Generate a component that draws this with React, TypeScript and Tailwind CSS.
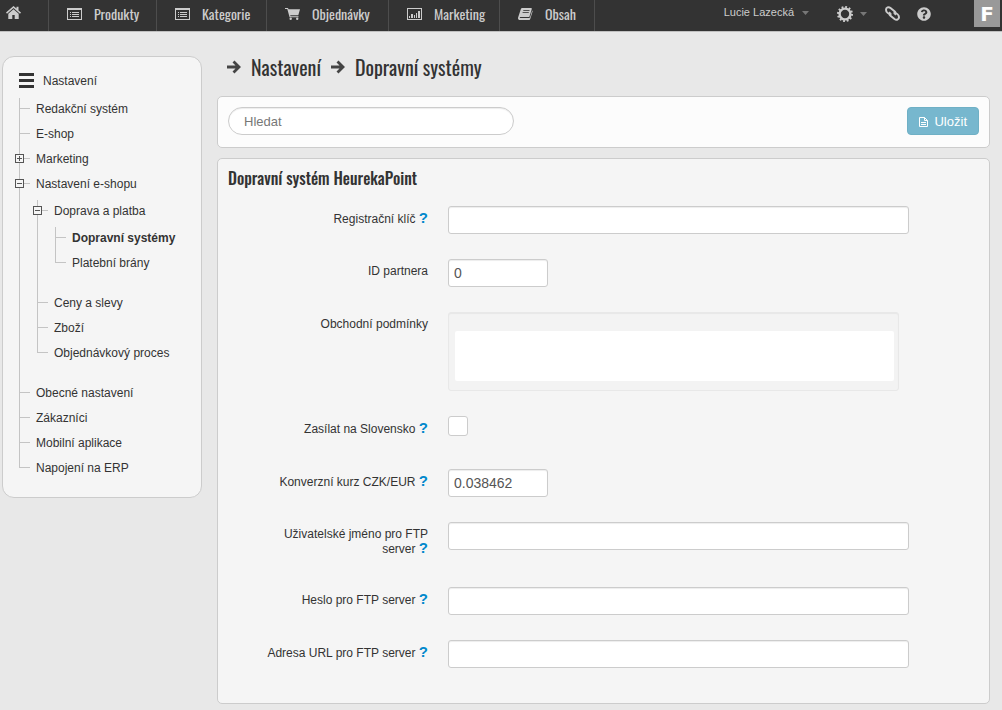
import type { ReactNode } from 'react';
import clsx from 'clsx';
import { FaQuestionCircle } from 'react-icons/fa';

type TreeNode = {
  label: string;
  active?: boolean;
  expandable?: boolean;
  children?: TreeNode[];
};

const TREE: TreeNode[] = [
  { label: 'Redakční systém' },
  { label: 'E-shop' },
  { label: 'Marketing', expandable: true },
  {
    label: 'Nastavení e-shopu',
    expandable: true,
    children: [
      {
        label: 'Doprava a platba',
        expandable: true,
        children: [
          { label: 'Dopravní systémy', active: true },
          { label: 'Platební brány' },
        ],
      },
      { label: 'Ceny a slevy' },
      { label: 'Zboží' },
      { label: 'Objednávkový proces' },
    ],
  },
  { label: 'Obecné nastavení' },
  { label: 'Zákazníci' },
  { label: 'Mobilní aplikace' },
  { label: 'Napojení na ERP' },
];

function HomeIcon() {
  return (
    <svg width="15" height="13" viewBox="0 0 15 13" fill="currentColor" aria-hidden="true">
      <path d="M7.5 0 0 6.6l1 1.1 6.5-5.6L14 7.7l1-1.1-2.5-2.2V.8h-2v1.8z" />
      <path d="M7.5 3.2 2.3 7.7V13h4V9h2.4v4h4V7.7z" />
    </svg>
  );
}

function ListIcon() {
  return (
    <svg width="15" height="12" viewBox="0 0 15 12" fill="currentColor" shapeRendering="crispEdges" aria-hidden="true">
      <path d="M0 0h15v12H0zM1 2v9h13V2z" fillRule="evenodd" />
      <path d="M3 4h1v1H3zM5 4h7v1H5zM3 6h1v1H3zM5 6h7v1H5zM3 8h1v1H3zM5 8h7v1H5z" />
    </svg>
  );
}

function CartIcon() {
  return (
    <svg width="15" height="12" viewBox="0 0 15 12" fill="currentColor" className="shrink-0" aria-hidden="true">
      <path d="M0 0h3l.5 1.3H15L13.3 7.3H5.2l.3 1h8v1H4.6L2.3 1H0z" />
      <circle cx="5.7" cy="10.8" r="1.2" />
      <circle cx="12.2" cy="10.8" r="1.2" />
    </svg>
  );
}

function ChartIcon() {
  return (
    <svg width="15" height="12" viewBox="0 0 15 12" fill="currentColor" shapeRendering="crispEdges" aria-hidden="true">
      <path d="M0 0h15v12H0zM1 1v10h13V1z" fillRule="evenodd" />
      <path d="M2 8h1v2H2zM4 6h2v4H4zM7 7h1v3H7zM9 5h1v5H9zM11 3h2v7h-2z" />
    </svg>
  );
}

function BookIcon() {
  return (
    <svg width="15" height="12" viewBox="0 0 15 12" aria-hidden="true">
      <path d="M4.5 0H13c.7 0 1 .4.8 1l-2.3 7.4c-.2.5-.5.7-1.1.7H2.2c-.7 0-.7.9.1.9h8.6c.7 0 1-.2 1.2-.8l2.1-6.7c.4.3.4.7.3 1.2l-2.2 7c-.2.8-.7 1.3-1.5 1.3H1.8C.5 12-.3 10.7.1 9.4l2.7-8.200C3.1.4 3.6 0 4.500 0z" fill="currentColor" />
      <path d="M5.3 2.500h6.200M4.600 4.500h6.200" stroke="#333" strokeWidth=".8" />
    </svg>
  );
}

function GearIcon() {
  return (
    <svg width="16" height="16" viewBox="0 0 16 16" fill="none" stroke="currentColor" aria-hidden="true">
      <circle cx="8" cy="8" r="5.4" strokeWidth="2.4" />
      <circle cx="8" cy="8" r="7" strokeWidth="2" strokeDasharray="1.83 1.835" />
    </svg>
  );
}

function LinkIcon() {
  return (
    <svg width="15" height="15" viewBox="0 0 15 15" fill="none" stroke="currentColor" strokeWidth="2" aria-hidden="true">
      <path d="M6.5 8.200C3.500 8 1 6 1 3.700 1 1.400 3.500.500 5.500 2l4 3.200c1.200 1 1.400 2.300.3 3.600" />
      <path d="M8.500 6.800C11.500 7 14 9 14 11.300c0 2.300-2.500 3.200-4.500 1.700l-4-3.200c-1.200-1-1.400-2.300-.3-3.600" />
    </svg>
  );
}

function Caret() {
  return (
    <svg width="7" height="4" viewBox="0 0 7 4" fill="#777" aria-hidden="true">
      <path d="M0 0h7L3.5 4z" />
    </svg>
  );
}

function ArrowIcon() {
  return (
    <svg width="14" height="14" viewBox="0 0 14 14" fill="none" stroke="#444" strokeWidth="2.8" aria-hidden="true">
      <path d="M0 7h12M6.500 1.500 12 7l-5.500 5.500" />
    </svg>
  );
}

function FileIcon() {
  return (
    <svg width="9" height="10" viewBox="0 0 9 10" fill="none" stroke="currentColor" aria-hidden="true">
      <path d="M.5.5h5l3 3v6h-8zM5.5.5v3h3M2 5.5h5M2 7.5h5" />
    </svg>
  );
}

const NAV = [
  { label: 'Produkty', icon: <ListIcon />, width: 'w-[108px]' },
  { label: 'Kategorie', icon: <ListIcon />, width: 'w-[110px]' },
  { label: 'Objednávky', icon: <CartIcon />, width: 'w-[122px]' },
  { label: 'Marketing', icon: <ChartIcon />, width: 'w-[111px]' },
  { label: 'Obsah', icon: <BookIcon />, width: 'w-[95px]' },
];

function Header() {
  return (
    <header className="flex h-8 items-stretch justify-between border-b border-[#c0c0c0] bg-[#333] text-[#ccc]">
      <nav className="flex">
        <a href="#" aria-label="Domů" className="flex w-[49px] items-center border-r border-[#4d4d4d] pb-1.5 pl-1.5">
          <HomeIcon />
        </a>
        {NAV.map(item => (
          <a
            key={item.label}
            href="#"
            className={clsx(
              "flex items-center gap-3 border-r border-[#4d4d4d] pb-1 pl-[18px] font-['Oswald',sans-serif] text-sm",
              item.width,
            )}
          >
            {item.icon}
            {item.label}
          </a>
        ))}
      </nav>
      <div className="flex items-center pr-0.5">
        <button type="button" className="mr-7 flex items-center gap-2 pb-1.5 text-[11px]">
          Lucie Lazecká
          <Caret />
        </button>
        <button type="button" aria-label="Nastavení účtu" className="mr-[18px] flex items-center gap-[7px] pb-1">
          <GearIcon />
          <Caret />
        </button>
        <a href="#" aria-label="Odkazy" className="mr-[17px] pb-1">
          <LinkIcon />
        </a>
        <a href="#" aria-label="Nápověda" className="mr-[43px] pb-1">
          <FaQuestionCircle size={14} />
        </a>
        <a
          href="#"
          className="mb-1 flex h-[27px] w-[26px] items-center justify-center bg-[#999] font-['DejaVu_Sans',sans-serif] text-xl font-bold text-white"
        >
          F
        </a>
      </div>
    </header>
  );
}

function Tree({ nodes, nested }: { nodes: TreeNode[]; nested?: boolean }) {
  return (
    <ul className={clsx(nested && 'mt-0.5 mb-[15px] ml-[7px]')}>
      {nodes.map((node, i) => (
        <li key={node.label} className="relative flex">
          <div className="flex w-[11px] flex-col">
            <div className="h-[11px] border-b border-l border-[#c4c4c4]" />
            {i < nodes.length - 1 && <div className="flex-1 border-l border-[#c4c4c4]" />}
          </div>
          {node.expandable && (
            <button
              type="button"
              aria-label={node.children ? 'Sbalit' : 'Rozbalit'}
              className="absolute top-1.5 -left-1 bg-[#f5f5f5] text-[#555]"
            >
              <svg width="9" height="9" viewBox="0 0 9 9" fill="none" stroke="currentColor" shapeRendering="crispEdges">
                <path d="M.5.5h8v8h-8zM2 4.5h5" />
                {!node.children && <path d="M4.5 2v5" />}
              </svg>
            </button>
          )}
          <div className="flex-1">
            <div className="h-[25px] pl-1.5 leading-[22px]">
              <a href="#" className={clsx(node.active && 'font-bold')}>
                {node.label}
              </a>
            </div>
            {node.children && <Tree nodes={node.children} nested />}
          </div>
        </li>
      ))}
    </ul>
  );
}

function Sidebar() {
  return (
    <aside className="w-[200px] shrink-0 rounded-xl border border-[#ccc] bg-[#f5f5f5] px-4 pt-3.5 pb-[15px]">
      <a href="#" className="flex h-[27px] gap-2 leading-5">
        <svg width="16" height="15" viewBox="0 0 16 15" fill="#333" className="mt-0.5" aria-hidden="true">
          <path d="M0 0h15v3H0zM0 6h15v3H0zM0 12h15v3H0z" />
        </svg>
        Nastavení
      </a>
      <Tree nodes={TREE} />
    </aside>
  );
}

const INPUT =
  'h-7 rounded-[3px] border border-[#ccc] bg-white px-[5px] text-sm text-[#555] shadow-[inset_0_1px_1px_rgba(0,0,0,0.075)] outline-none';

function Row({ id, label, help, children }: { id: string; label: string; help?: boolean; children: ReactNode }) {
  return (
    <div className="flex min-h-7 gap-5">
      <div className="w-[200px] shrink-0 pt-[5px] pb-1.5 pl-5 text-right leading-[14px]">
        <label htmlFor={id}>{label}</label>
        {help && (
          <>
            {' '}
            <a href="#" className="text-[15px] leading-[14px] font-bold text-[#08c]">?</a>
          </>
        )}
      </div>
      <div className="min-w-0 flex-1">{children}</div>
    </div>
  );
}

function SettingsForm() {
  return (
    <form className="rounded-[5px] border border-[#ccc] bg-[#f5f5f5] px-2.5 pt-1.5 pb-[35px]">
      <h2 className="mb-[15px] font-['Oswald',sans-serif] text-base leading-[26px] font-medium">
        Dopravní systém HeurekaPoint
      </h2>
      <div className="flex flex-col gap-[25px]">
        <Row id="key" label="Registrační klíč" help>
          <input id="key" type="text" className={clsx(INPUT, 'block w-full max-w-[461px]')} />
        </Row>
        <Row id="partner" label="ID partnera">
          <input id="partner" type="text" defaultValue="0" className={clsx(INPUT, 'block w-[100px]')} />
        </Row>
        <Row id="terms" label="Obchodní podmínky">
          <div className="max-w-[451px] rounded-[3px] border border-[#e8e8e8] bg-[#f3f3f3] pt-[18px] pr-1 pb-[9px] pl-1.5 shadow-[inset_0_1px_1px_rgba(0,0,0,0.05)]">
            <textarea id="terms" className="block h-[50px] w-full resize-none rounded-[2px] bg-white px-1.5 outline-none" />
          </div>
        </Row>
        <Row id="slovakia" label="Zasílat na Slovensko" help>
          <input
            id="slovakia"
            type="checkbox"
            className="block size-5 appearance-none rounded-[3px] border border-[#ccc] bg-white checked:bg-[#08c]"
          />
        </Row>
        <Row id="rate" label="Konverzní kurz CZK/EUR" help>
          <input id="rate" type="text" defaultValue="0.038462" className={clsx(INPUT, 'block w-[100px]')} />
        </Row>
        <Row id="ftp-user" label="Uživatelské jméno pro FTP server" help>
          <input id="ftp-user" type="text" className={clsx(INPUT, 'block w-full max-w-[461px]')} />
        </Row>
        <Row id="ftp-password" label="Heslo pro FTP server" help>
          <input id="ftp-password" type="password" className={clsx(INPUT, 'block w-full max-w-[461px]')} />
        </Row>
        <Row id="ftp-url" label="Adresa URL pro FTP server" help>
          <input id="ftp-url" type="text" className={clsx(INPUT, 'block w-full max-w-[461px]')} />
        </Row>
      </div>
    </form>
  );
}

export default function App() {
  return (
    <div className="min-h-screen bg-[#e8e8e8] font-['Liberation_Sans',Arial,sans-serif] text-xs text-[#333]">
      <Header />
      <div className="flex items-start gap-[15px] pt-6 pr-3 pl-0.5">
        <Sidebar />
        <main className="min-w-0 flex-1 pb-1.5">
          <h1 className="mb-[18px] flex h-[22px] items-center gap-2.5 pl-2.5 font-['Oswald',sans-serif] text-xl">
            <ArrowIcon />
            <a href="#">Nastavení</a>
            <ArrowIcon />
            <span>Dopravní systémy</span>
          </h1>
          <div className="mb-2.5 flex items-start justify-between rounded-[5px] border border-[#ccc] bg-[#fcfcfc] px-2.5 pt-2.5 pb-3">
            <input
              type="search"
              aria-label="Hledat"
              placeholder="Hledat"
              className="h-7 w-[286px] rounded-full border border-[#ccc] bg-white px-[15px] text-[13px] shadow-[inset_0_1px_1px_rgba(0,0,0,0.075)] outline-none placeholder:text-[#777]"
            />
            <button
              type="button"
              className="flex h-7 items-center gap-1.5 rounded-[4px] border border-[#6fb0c5] bg-[#77b7ce] px-[11px] pt-0.5 text-[13px] text-white"
            >
              <FileIcon />
              Uložit
            </button>
          </div>
          <SettingsForm />
        </main>
      </div>
    </div>
  );
}
